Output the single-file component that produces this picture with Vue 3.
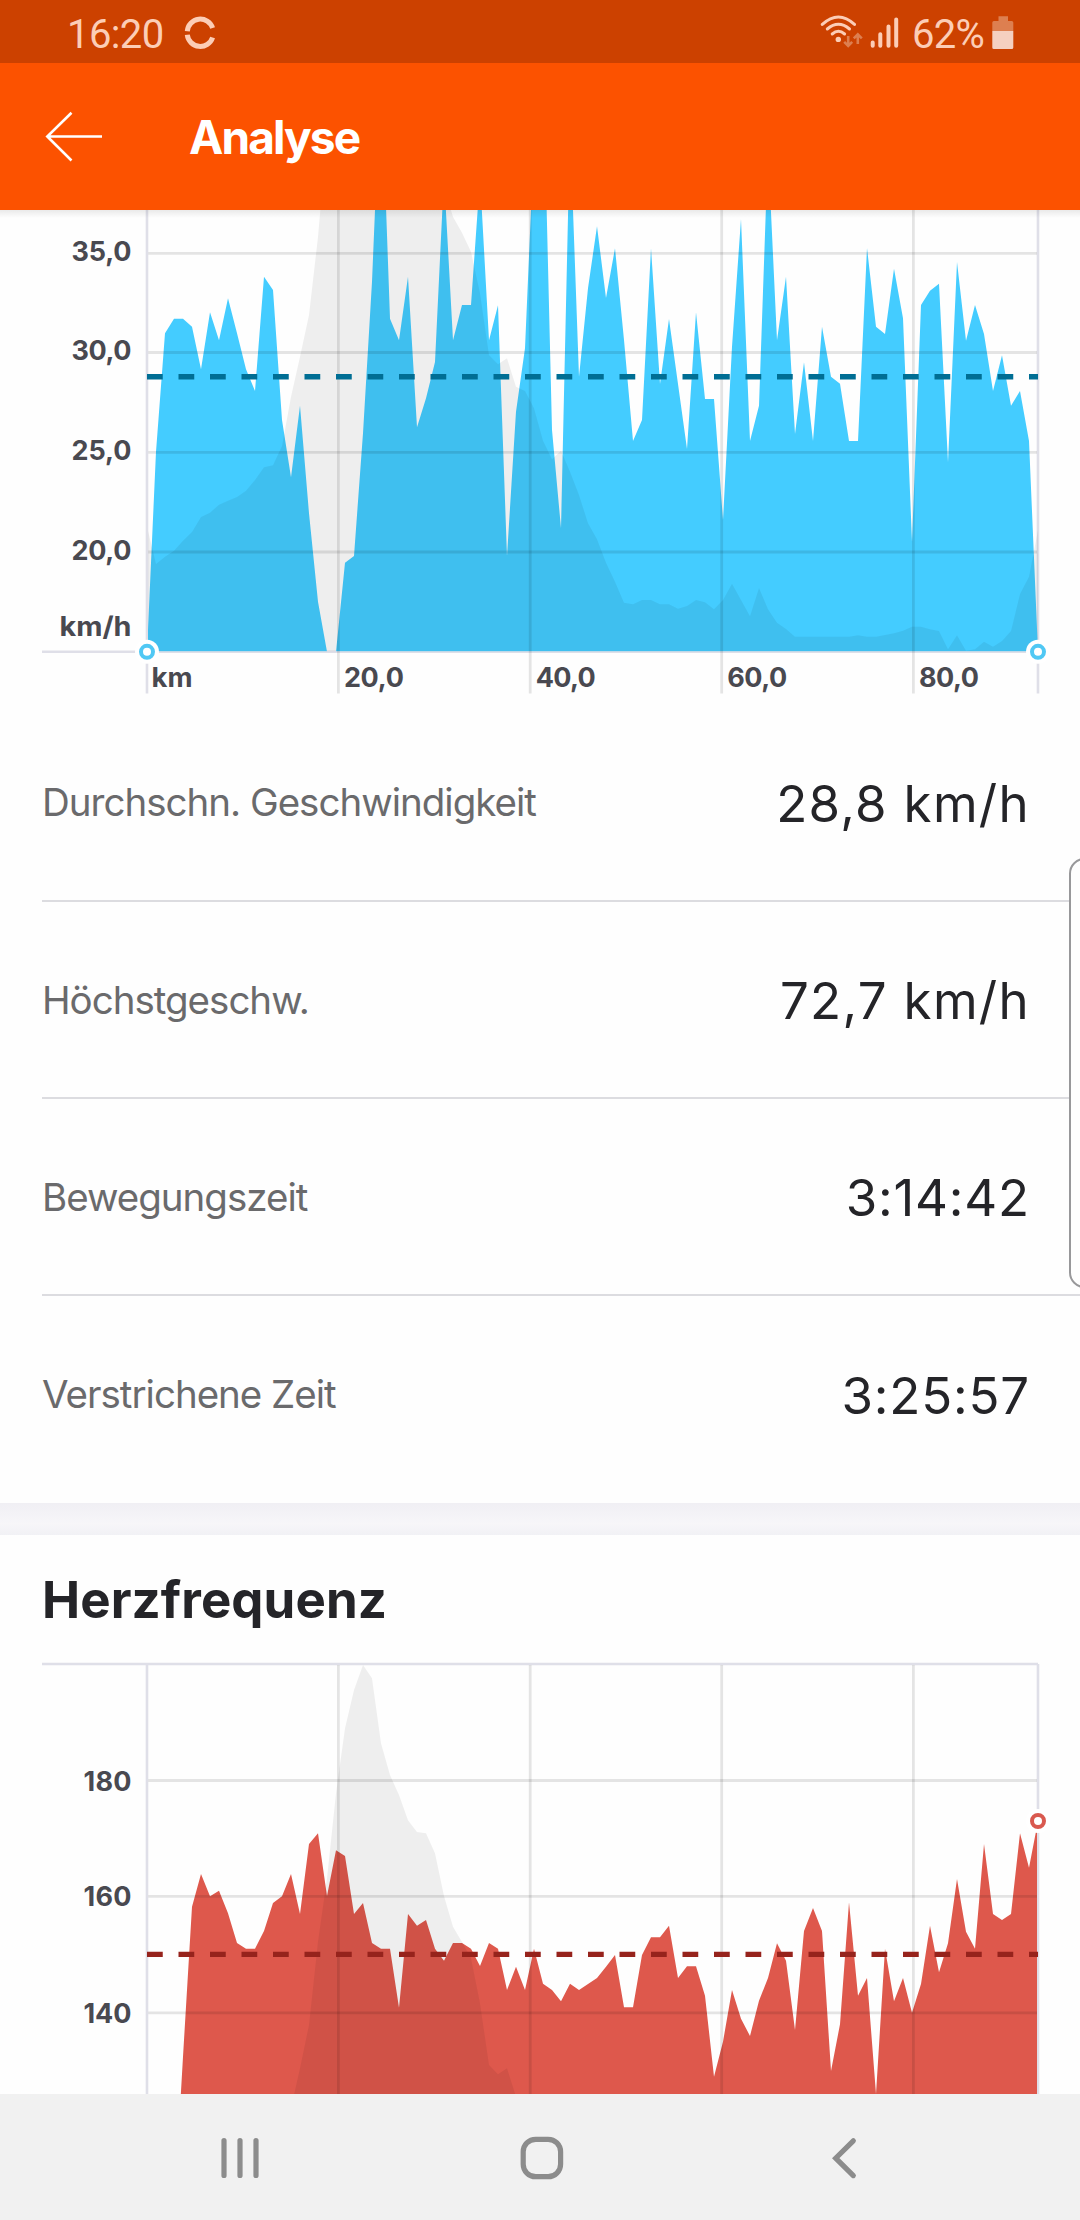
<script setup>
const X0 = 147
const STEP = 9

// Series are stored in thirds of a pixel, measured down from the chart origin.
const speed = [
  1355, 755, 400, 356, 356, 380, 508, 337, 421, 295, 400, 508, 573, 230, 270, 660, 832, 617, 940, 1205,
  1355, 1355, 1088, 1068, 700, 245, -400, 356, 421, 230, 682, 595, 486, -73, 421, 315, 315, -70, 421, 316,
  1068, 635, 445, -177, -424, 690, 985, -220, 530, 265, 79, 294, 145, 420, 723, 660, 145, 552, 357, 552,
  747, 337, 597, 597, 960, 440, 57, 723, 617, -155, 421, 230, 702, 487, 723, 380, 530, 551, 723, 723,
  144, 380, 402, 206, 355, 1025, 315, 272, 251, 787, 186, 422, 315, 402, 573, 466, 617, 573, 723, 1355,
]
const speedElevation = [
  980, 1092, 1070, 1052, 1022, 996, 951, 938, 914, 902, 891, 872, 840, 802, 796, 738, 590, 470, 345, 110,
  -200, -300, -400, -500, -600, -600, -500, -400, -350, -300, -250, -200, -120, -40, 50, 98, 155, 280, 465, 493,
  475, 560, 573, 625, 722, 778, 752, 815, 885, 970, 1018, 1088, 1145, 1208, 1213, 1200, 1200, 1213, 1213, 1226,
  1218, 1200, 1207, 1228, 1200, 1151, 1200, 1249, 1164, 1228, 1268, 1287, 1310, 1310, 1310, 1310, 1310, 1310, 1310, 1306,
  1310, 1310, 1305, 1300, 1292, 1280, 1280, 1288, 1293, 1348, 1306, 1352, 1348, 1325, 1340, 1323, 1293, 1182, 1130, 990,
]
const heart = [
  1800, 1800, 1800, 1720, 1250, 800, 702, 769, 752, 820, 909, 926, 926, 873, 789, 769, 702, 822, 612, 580,
  768, 631, 648, 822, 789, 909, 926, 926, 1103, 822, 857, 840, 926, 962, 909, 909, 926, 978, 909, 926,
  1050, 980, 1050, 926, 1031, 1050, 1084, 1031, 1050, 1032, 1014, 980, 945, 1102, 1102, 945, 892, 892, 857, 1014,
  979, 979, 1067, 1310, 1205, 1050, 1136, 1188, 1082, 1014, 910, 962, 1170, 873, 804, 873, 1293, 1153, 787, 1067,
  1014, 1362, 926, 1084, 1014, 1118, 1032, 857, 997, 910, 717, 875, 926, 612, 822, 840, 822, 580, 683, 543,
]
const heartElevation = [
  ...Array(16).fill(1600),
  1405, 1285, 1155, 905, 715, 460, 265, 150, 75, 115, 310, 405, 465, 541, 576, 580, 640, 768, 860, 906,
  955, 1090, 1275, 1303, 1285, 1370,
  ...Array(58).fill(1600),
]

function area(values, bottom) {
  const top = values.map((v, i) => `${X0 + STEP * i},${(v / 3).toFixed(1)}`).join(' ')
  return `${X0},${bottom} ${top} ${X0 + STEP * (values.length - 1)},${bottom}`
}

const speedTicks = [
  { label: '35,0', line: 53.3, base: 61 },
  { label: '30,0', line: 152.5, base: 159.7 },
  { label: '25,0', line: 252.3, base: 259.7 },
  { label: '20,0', line: 352, base: 359.7 },
]
const heartTicks = [
  { label: '180', line: 140.5, base: 150.7 },
  { label: '160', line: 256.3, base: 265.8 },
  { label: '140', line: 372.8, base: 382.6 },
]
const kmTicks = [
  { label: '20,0', x: 338.4 },
  { label: '40,0', x: 530.2 },
  { label: '60,0', x: 721.7 },
  { label: '80,0', x: 913.4 },
]
const stats = [
  { label: 'Durchschn. Geschwindigkeit', value: '28,8 km/h', cls: 'first' },
  { label: 'Höchstgeschw.', value: '72,7 km/h', cls: '' },
  { label: 'Bewegungszeit', value: '3:14:42', cls: 'time' },
  { label: 'Verstrichene Zeit', value: '3:25:57', cls: 'time last' },
]
</script>

<template>
  <div class="screen">
    <div class="status">
      <span class="clock">16:20</span>
      <svg class="sync" width="32" height="34" viewBox="184 16 32 34">
        <g fill="none" stroke="#fccdb6" stroke-width="5">
          <path d="M187.3 31.2A13 13 0 0 1 212.6 28" />
          <path d="M187.3 34.8A13 13 0 0 0 212.6 37.4" />
        </g>
      </svg>
      <svg class="radio" width="82" height="36" viewBox="818 14 82 36">
        <g fill="none" stroke="#fccdb6" stroke-width="3" stroke-linecap="round">
          <path d="M821.3 24.4Q837.4 9.6 853.5 24.4" />
          <path d="M826.3 29Q837.4 19.6 848.5 29" />
          <path d="M831.2 34Q837.4 28.6 843.6 34" />
        </g>
        <circle cx="837.3" cy="39.4" r="2.7" fill="#fccdb6" />
        <g fill="none" stroke="#dd7f50" stroke-width="2.6">
          <path d="M847.2 36V46M843.2 41.8L847.2 45.8L851.2 41.8" />
          <path d="M856.8 44V34.5M852.8 38.4L856.8 34.4L860.8 38.4" />
        </g>
        <g stroke="#fccdb6" stroke-width="4" stroke-linecap="round">
          <path d="M871.7 42.5V45.7M879.3 34.2V45.7M887.5 26.5V45.7M895.2 19.5V45.7" />
        </g>
      </svg>
      <span class="percent">62%</span>
      <svg class="battery" width="22" height="34" viewBox="991.5 16 22 34">
        <path d="M998 16.2h9.5v4.8h3.7a1.6 1.6 0 0 1 1.6 1.6V31H991.8v-8.4a1.6 1.6 0 0 1 1.6-1.6h4.6z" fill="#dd7f50" />
        <path d="M991.8 31h21v16.4a1.6 1.6 0 0 1-1.6 1.6h-17.8a1.6 1.6 0 0 1-1.6-1.6z" fill="#f5d0c0" />
      </svg>
    </div>

    <header class="appbar">
      <svg class="back" width="60" height="54" viewBox="44 110 60 54">
        <path d="M71.5 112.8L47.3 136.5L71.5 160.5M47.3 136.5H102" fill="none" stroke="#fff" stroke-width="2.6" />
      </svg>
      <h1>Analyse</h1>
    </header>

    <main>
      <section class="speed">
        <svg class="chart" width="1080" height="494" viewBox="0 10 1080 494">
          <defs>
            <linearGradient id="barShade" x1="0" y1="0" x2="0" y2="1">
              <stop offset="0" stop-color="#000" stop-opacity=".08" />
              <stop offset="1" stop-color="#000" stop-opacity="0" />
            </linearGradient>
            <clipPath id="speedClip"><rect x="148" y="10" width="890" height="441.2" /></clipPath>
          </defs>
          <g stroke="#dfdfe8" stroke-width="2.6">
            <path d="M147 10V493.5M1038 10V493.5" />
            <path d="M42 451.8H1038" />
          </g>
          <g clip-path="url(#speedClip)">
            <polygon :points="area(speed, 451.7)" fill="#44ccff" />
            <polygon :points="area(speedElevation, 451.7)" fill="#000" fill-opacity=".062" />
          </g>
          <g stroke="#000" stroke-opacity=".1" stroke-width="2.8">
            <line v-for="t in speedTicks" :key="t.label" x1="148.3" x2="1037" :y1="t.line" :y2="t.line" />
            <line v-for="t in kmTicks" :key="t.label" :x1="t.x" :x2="t.x" y1="10" y2="493.5" />
          </g>
          <line x1="147" x2="1038" y1="176.7" y2="176.7" stroke="#006e94" stroke-width="5.4" stroke-dasharray="15.75 15.75" />
          <g class="axis" text-anchor="end">
            <text v-for="t in speedTicks" :key="t.label" x="131.5" :y="t.base" textLength="60">{{ t.label }}</text>
            <text x="131.5" y="435.6" textLength="72" lengthAdjust="spacingAndGlyphs">km/h</text>
          </g>
          <g class="axis">
            <text x="151.5" y="486.8" textLength="41" lengthAdjust="spacingAndGlyphs">km</text>
            <text v-for="t in kmTicks" :key="t.label" :x="t.x + 5.5" y="486.8" textLength="60">{{ t.label }}</text>
          </g>
          <g v-for="x in [147, 1038]" :key="x">
            <circle :cx="x" cy="451.8" r="12" fill="#fff" />
            <circle :cx="x" cy="451.8" r="6" fill="#fff" stroke="#50c8f4" stroke-width="4" />
          </g>
          <rect x="0" y="10" width="1080" height="8" fill="url(#barShade)" />
        </svg>

        <dl class="stats">
          <div v-for="s in stats" :key="s.label" class="row" :class="s.cls">
            <dt>{{ s.label }}</dt>
            <dd>{{ s.value }}</dd>
          </div>
        </dl>
      </section>

      <div class="band"></div>

      <section class="heart">
        <h2>Herzfrequenz</h2>
        <svg class="chart" width="1080" height="454" viewBox="0 0 1080 454">
          <defs>
            <clipPath id="heartClip"><rect x="147" y="0" width="890" height="454" /></clipPath>
          </defs>
          <path d="M42 24H1038M147 24V454M1038 24V454" fill="none" stroke="#dfdfe8" stroke-width="2.6" />
          <g clip-path="url(#heartClip)">
            <polygon :points="area(heart, 620)" fill="#de584c" />
            <polygon :points="area(heartElevation, 620)" fill="#000" fill-opacity=".062" />
          </g>
          <g stroke="#000" stroke-opacity=".1" stroke-width="2.8">
            <line v-for="t in heartTicks" :key="t.label" x1="148.3" x2="1037" :y1="t.line" :y2="t.line" />
            <line v-for="t in kmTicks" :key="t.label" :x1="t.x" :x2="t.x" y1="25" y2="454" />
          </g>
          <line x1="147" x2="1038" y1="314.4" y2="314.4" stroke="#96231c" stroke-width="5.2" stroke-dasharray="15.75 15.75" />
          <g class="axis" text-anchor="end">
            <text v-for="t in heartTicks" :key="t.label" x="131.5" :y="t.base" textLength="48">{{ t.label }}</text>
          </g>
          <circle cx="1038" cy="181" r="12" fill="#fff" />
          <circle cx="1038" cy="181" r="6" fill="#fff" stroke="#d9594f" stroke-width="4" />
        </svg>
      </section>

      <div class="edge-panel"></div>
    </main>

    <nav class="navbar">
      <svg width="1080" height="126" viewBox="0 2094 1080 126" fill="none" stroke="#8c8c8c" stroke-width="5.2" stroke-linecap="round">
        <path d="M224 2140.5V2175.5M240 2140.5V2175.5M256 2140.5V2175.5" />
        <rect x="523.2" y="2139.3" width="37.4" height="37.4" rx="12.5" />
        <path d="M853.3 2140.8L835.7 2158.2L853.3 2175.6" />
      </svg>
    </nav>
  </div>
</template>

<style>
body {
  margin: 0;
  background: #fff;
}
</style>

<style scoped>
.screen {
  display: flex;
  flex-direction: column;
  width: 1080px;
  height: 2220px;
  overflow: hidden;
  background: #fefefe;
  font-family: Inter, "Liberation Sans", sans-serif;
}
svg {
  display: block;
  flex: none;
}
.status {
  display: flex;
  box-sizing: border-box;
  height: 63px;
  padding: 0 66px 0 67px;
  background: #cc4100;
  color: #fccdb6;
  font: 40px/69px Roboto, sans-serif;
}
.clock {
  width: 117px;
  letter-spacing: -0.6px;
}
.sync {
  margin-top: 16px;
}
.radio {
  margin: 14px 0 0 auto;
}
.percent {
  width: 80px;
  margin-left: 11.5px;
  letter-spacing: -0.7px;
}
.battery {
  margin-top: 16px;
}
.appbar {
  display: flex;
  align-items: center;
  height: 147px;
  background: #fc5200;
}
.back {
  margin: 1px 85px 0 44px;
}
h1 {
  margin: 0;
  color: #fff;
  font-size: 46px;
  font-weight: 700;
  letter-spacing: -1.9px;
}
main {
  position: relative;
  height: 1884px;
}
.axis {
  fill: #494950;
  font-size: 27px;
  font-weight: 700;
}
.stats {
  margin: 0;
}
.row {
  display: flex;
  align-items: center;
  justify-content: space-between;
  box-sizing: border-box;
  height: 197px;
  margin-left: 42px;
  padding-right: 50px;
  border-bottom: 2px solid #dcdce0;
}
.row.first {
  height: 198px;
}
.row.last {
  height: 207px;
  padding-bottom: 11px;
  border-bottom: 0;
}
dt {
  color: #6a6a6c;
  font-size: 38.5px;
  font-weight: 400;
  letter-spacing: -1px;
}
dd {
  margin: 2px 0 0;
  color: #242428;
  font-size: 51px;
  font-weight: 400;
  letter-spacing: 1.3px;
}
.time dd {
  letter-spacing: 0.8px;
}
.band {
  height: 32px;
  background: linear-gradient(#f0eff4, #f7f6f9 65%, #f1f1f5);
}
.heart {
  height: 559px;
  overflow: hidden;
}
h2 {
  box-sizing: border-box;
  height: 105px;
  margin: 0;
  padding: 34px 0 0 42px;
  color: #242428;
  font-size: 51px;
  font-weight: 700;
  letter-spacing: 0.1px;
  line-height: 62px;
}
.edge-panel {
  position: absolute;
  top: 648px;
  right: -20px;
  box-sizing: border-box;
  width: 31px;
  height: 430px;
  border: 2px solid #98989a;
  border-radius: 17px;
  background: #fefefe;
}
.navbar {
  height: 126px;
  background: #f1f1f1;
}
</style>
